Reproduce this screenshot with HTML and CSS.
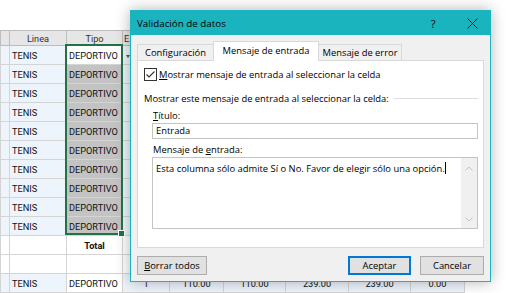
FILE: index.html
```html
<!DOCTYPE html>
<html lang="es">
<head>
  <meta charset="UTF-8" />
  <title>Validación de datos</title>
  <link rel="stylesheet" href="styles.css">
</head>
<body>

  <div class="sheet">
    <table class="grid">
      <colgroup>
        <col class="w9"><col class="w57"><col class="w56"><col class="w47"><col class="w54">
        <col class="w62"><col class="w63"><col class="w62"><col class="w54">
      </colgroup>
      <tr class="head"><th></th><th>Linea</th><th>Tipo</th><th class="left">E</th><th></th><th></th><th></th><th></th><th></th></tr>
      <tr class="band"><td></td><td>TENIS</td><td class="active">DEPORTIVO</td><td><span class="dd"></span></td><td></td><td></td><td></td><td></td><td></td></tr>
      <tr class="band"><td></td><td>TENIS</td><td class="sel">DEPORTIVO</td><td></td><td></td><td></td><td></td><td></td><td></td></tr>
      <tr class="band"><td></td><td>TENIS</td><td class="sel">DEPORTIVO</td><td></td><td></td><td></td><td></td><td></td><td></td></tr>
      <tr class="band"><td></td><td>TENIS</td><td class="sel">DEPORTIVO</td><td></td><td></td><td></td><td></td><td></td><td></td></tr>
      <tr class="band"><td></td><td>TENIS</td><td class="sel">DEPORTIVO</td><td></td><td></td><td></td><td></td><td></td><td></td></tr>
      <tr class="band"><td></td><td>TENIS</td><td class="sel">DEPORTIVO</td><td></td><td></td><td></td><td></td><td></td><td></td></tr>
      <tr class="band"><td></td><td>TENIS</td><td class="sel">DEPORTIVO</td><td></td><td></td><td></td><td></td><td></td><td></td></tr>
      <tr class="band"><td></td><td>TENIS</td><td class="sel">DEPORTIVO</td><td></td><td></td><td></td><td></td><td></td><td></td></tr>
      <tr class="band"><td></td><td>TENIS</td><td class="sel">DEPORTIVO</td><td></td><td></td><td></td><td></td><td></td><td></td></tr>
      <tr class="band"><td></td><td>TENIS</td><td class="sel">DEPORTIVO</td><td></td><td></td><td></td><td></td><td></td><td></td></tr>
      <tr><td></td><td></td><td class="total">Total</td><td></td><td></td><td></td><td></td><td></td><td></td></tr>
      <tr><td></td><td></td><td></td><td></td><td></td><td></td><td></td><td></td><td></td></tr>
      <tr class="band">
        <td></td><td>TENIS</td><td class="plain">DEPORTIVO</td><td class="num">1</td>
        <td class="num">110.00</td><td class="num">110.00</td><td class="num">239.00</td><td class="num">239.00</td><td class="num">0.00</td>
      </tr>
    </table>
    <div class="selection"><span class="handle"></span></div>
  </div>

  <div class="dialog">
    <div class="titlebar">
      <span class="title">Validación de datos</span>
      <span class="help">?</span>
      <span class="close">
        <svg width="11" height="11" viewBox="0 0 11 11"><path d="M0.5 0.5 L10.5 10.5 M10.5 0.5 L0.5 10.5" stroke="#1a1a1a" stroke-width="1" fill="none"/></svg>
      </span>
    </div>

    <div class="dlg-body">
      <div class="tabs">
        <div class="tab t1">Configuración</div>
        <div class="tab t2 active">Mensaje de entrada</div>
        <div class="tab t3">Mensaje de error</div>
      </div>

      <div class="panel">
        <div class="check">
          <span class="box">
            <svg width="11" height="11" viewBox="0 0 11 11"><path d="M1.5 5.5 L4 8 L9.5 2.5" stroke="#333" stroke-width="1.1" fill="none"/></svg>
          </span>
          <span><u>M</u>ostrar mensaje de entrada al seleccionar la celda</span>
        </div>

        <div class="group">
          <span>Mostrar este mensaje de entrada al seleccionar la celda:</span>
          <span class="rule"></span>
        </div>

        <div class="field-label"><u>T</u>ítulo:</div>
        <div class="input">Entrada</div>

        <div class="field-label">Mensaje de <u>e</u>ntrada:</div>
        <div class="textarea">
          <div class="ta-text">Esta columna sólo admite Sí o No. Favor de elegir sólo una opción.<span class="caret"></span></div>
          <div class="scroll">
            <svg width="8" height="5" viewBox="0 0 8 5"><path d="M0.5 4.5 L4 1 L7.5 4.5" stroke="#c2c2c2" fill="none"/></svg>
            <svg width="8" height="5" viewBox="0 0 8 5"><path d="M0.5 0.5 L4 4 L7.5 0.5" stroke="#c2c2c2" fill="none"/></svg>
          </div>
        </div>
      </div>

      <div class="buttons">
        <button class="btn wide"><u>B</u>orrar todos</button>
        <span class="spacer"></span>
        <button class="btn primary">Aceptar</button>
        <button class="btn">Cancelar</button>
      </div>
    </div>
  </div>

</body>
</html>
```

FILE: styles.css
```css
body {
  margin: 0;
  background-color: #fff;
  font-family: Roboto, "Liberation Sans", sans-serif;
  width: 506px;
  height: 293px;
  overflow: hidden;
  position: relative;
}

/* spreadsheet behind the dialog */
.sheet {
  position: relative;
  padding-top: 30px;
}
.grid {
  border-collapse: collapse;
  table-layout: fixed;
  width: 464px;
  font-size: 9.2px;
  color: #111;
}
.w9 { width: 9px; }
.w47 { width: 47px; }
.w54 { width: 54px; }
.w56 { width: 56px; }
.w57 { width: 57px; }
.w62 { width: 62px; }
.w63 { width: 63px; }
.grid tr {
  height: 19px;
}
.grid tr.head {
  height: 15px;
}
.grid th, .grid td {
  border: 1px solid #d4d4d4;
  padding: 0 2px;
  white-space: nowrap;
  overflow: hidden;
  text-align: left;
}
.grid th {
  background-color: #e6e6e6;
  border-color: #bdbdbd;
  font-weight: normal;
  text-align: center;
  color: #333;
}
.grid th.left {
  text-align: left;
  padding-left: 1px;
}
.grid .band td {
  background-color: #edf4fb;
}
.grid .band td.sel {
  background-color: #c3c3c3;
}
.grid .band td.active,
.grid .band td.plain {
  background-color: #fff;
}
.grid td.total {
  font-weight: bold;
  text-align: center;
}
.grid td.num {
  text-align: center;
}
.dd {
  display: inline-block;
  margin-left: 1px;
  border-left: 2.5px solid transparent;
  border-right: 2.5px solid transparent;
  border-top: 3px solid #555;
  vertical-align: middle;
}
.selection {
  position: absolute;
  left: 65px;
  top: 44px;
  width: 58px;
  height: 191px;
  border: 2px solid #217346;
  box-sizing: border-box;
}
.handle {
  position: absolute;
  right: -4px;
  bottom: -4px;
  width: 5px;
  height: 5px;
  background-color: #217346;
  border: 1px solid #fff;
}

/* dialog */
.dialog {
  position: absolute;
  left: 130px;
  top: 10px;
  width: 361px;
  height: 272px;
  box-sizing: border-box;
  border: 1px solid #1ab4bf;
  background-color: #f0f0f0;
  box-shadow: 0 0 14px rgba(0, 0, 0, 0.3);
  font-family: "Open Sans", "Noto Sans", sans-serif;
  font-size: 9.4px;
  color: #000;
  display: flex;
  flex-direction: column;
}
.titlebar {
  height: 24px;
  background-color: #1ab4bf;
  display: flex;
  align-items: center;
  padding-left: 6px;
  font-size: 9.8px;
}
.title {
  flex: 1;
}
.help {
  width: 20px;
  text-align: center;
  font-size: 11px;
  margin-right: 14px;
}
.close {
  width: 30px;
  margin-right: 3px;
  display: flex;
  justify-content: center;
}
.dlg-body {
  flex: 1;
  padding: 6px 6px 0 6px;
  display: flex;
  flex-direction: column;
}
.tabs {
  display: flex;
  align-items: flex-end;
  height: 19px;
  position: relative;
  z-index: 1;
}
.tab {
  height: 16px;
  box-sizing: border-box;
  border: 1px solid #d9d9d9;
  border-bottom: none;
  background-color: #f0f0f0;
  text-align: center;
  line-height: 15px;
}
.t1 { width: 77px; }
.t2 { width: 106px; margin-left: -1px; }
.t3 { width: 84px; margin-left: -1px; }
.tab.active {
  height: 20px;
  margin-bottom: -1px;
  background-color: #fff;
  line-height: 17px;
}
.panel {
  height: 188px;
  box-sizing: border-box;
  border: 1px solid #d9d9d9;
  background-color: #fff;
}
.check {
  display: flex;
  align-items: center;
  margin: 7px 0 0 6px;
  height: 13px;
}
.box {
  width: 13px;
  height: 13px;
  box-sizing: border-box;
  border: 1px solid #333;
  display: flex;
  align-items: center;
  justify-content: center;
  margin-right: 2px;
}
.group {
  display: flex;
  align-items: center;
  margin: 11px 5px 0 6px;
  height: 13px;
}
.rule {
  flex: 1;
  border-top: 1px solid #dcdcdc;
  margin-left: 5px;
}
.field-label {
  margin: 4px 0 0 15px;
  height: 13px;
  line-height: 13px;
}
.input {
  margin: 1px 5px 0 14px;
  height: 16px;
  box-sizing: border-box;
  border: 1px solid #c4c4c4;
  padding-left: 3px;
  line-height: 14px;
}
.textarea {
  margin: 1px 5px 0 14px;
  height: 72px;
  box-sizing: border-box;
  border: 1px solid #c4c4c4;
  display: flex;
}
.ta-text {
  flex: 1;
  padding: 4px 0 0 3px;
  line-height: 13px;
}
.caret {
  display: inline-block;
  width: 1px;
  height: 12px;
  background-color: #000;
  vertical-align: -2px;
}
.scroll {
  width: 16px;
  background-color: #f0f0f0;
  display: flex;
  flex-direction: column;
  justify-content: space-between;
  align-items: center;
  padding: 8px 0 6px;
}
.buttons {
  display: flex;
  margin-top: 8px;
}
.spacer {
  flex: 1;
}
.btn {
  height: 19px;
  width: 63px;
  box-sizing: border-box;
  border: 1px solid #adadad;
  background-color: #e1e1e1;
  font: inherit;
  color: #000;
  padding: 0;
}
.btn.wide {
  width: 70px;
}
.btn.primary {
  border-color: #0078d7;
  box-shadow: inset 0 0 0 1px #0078d7;
  margin-right: 9px;
}
.btn + .btn {
  width: 64px;
}
```
